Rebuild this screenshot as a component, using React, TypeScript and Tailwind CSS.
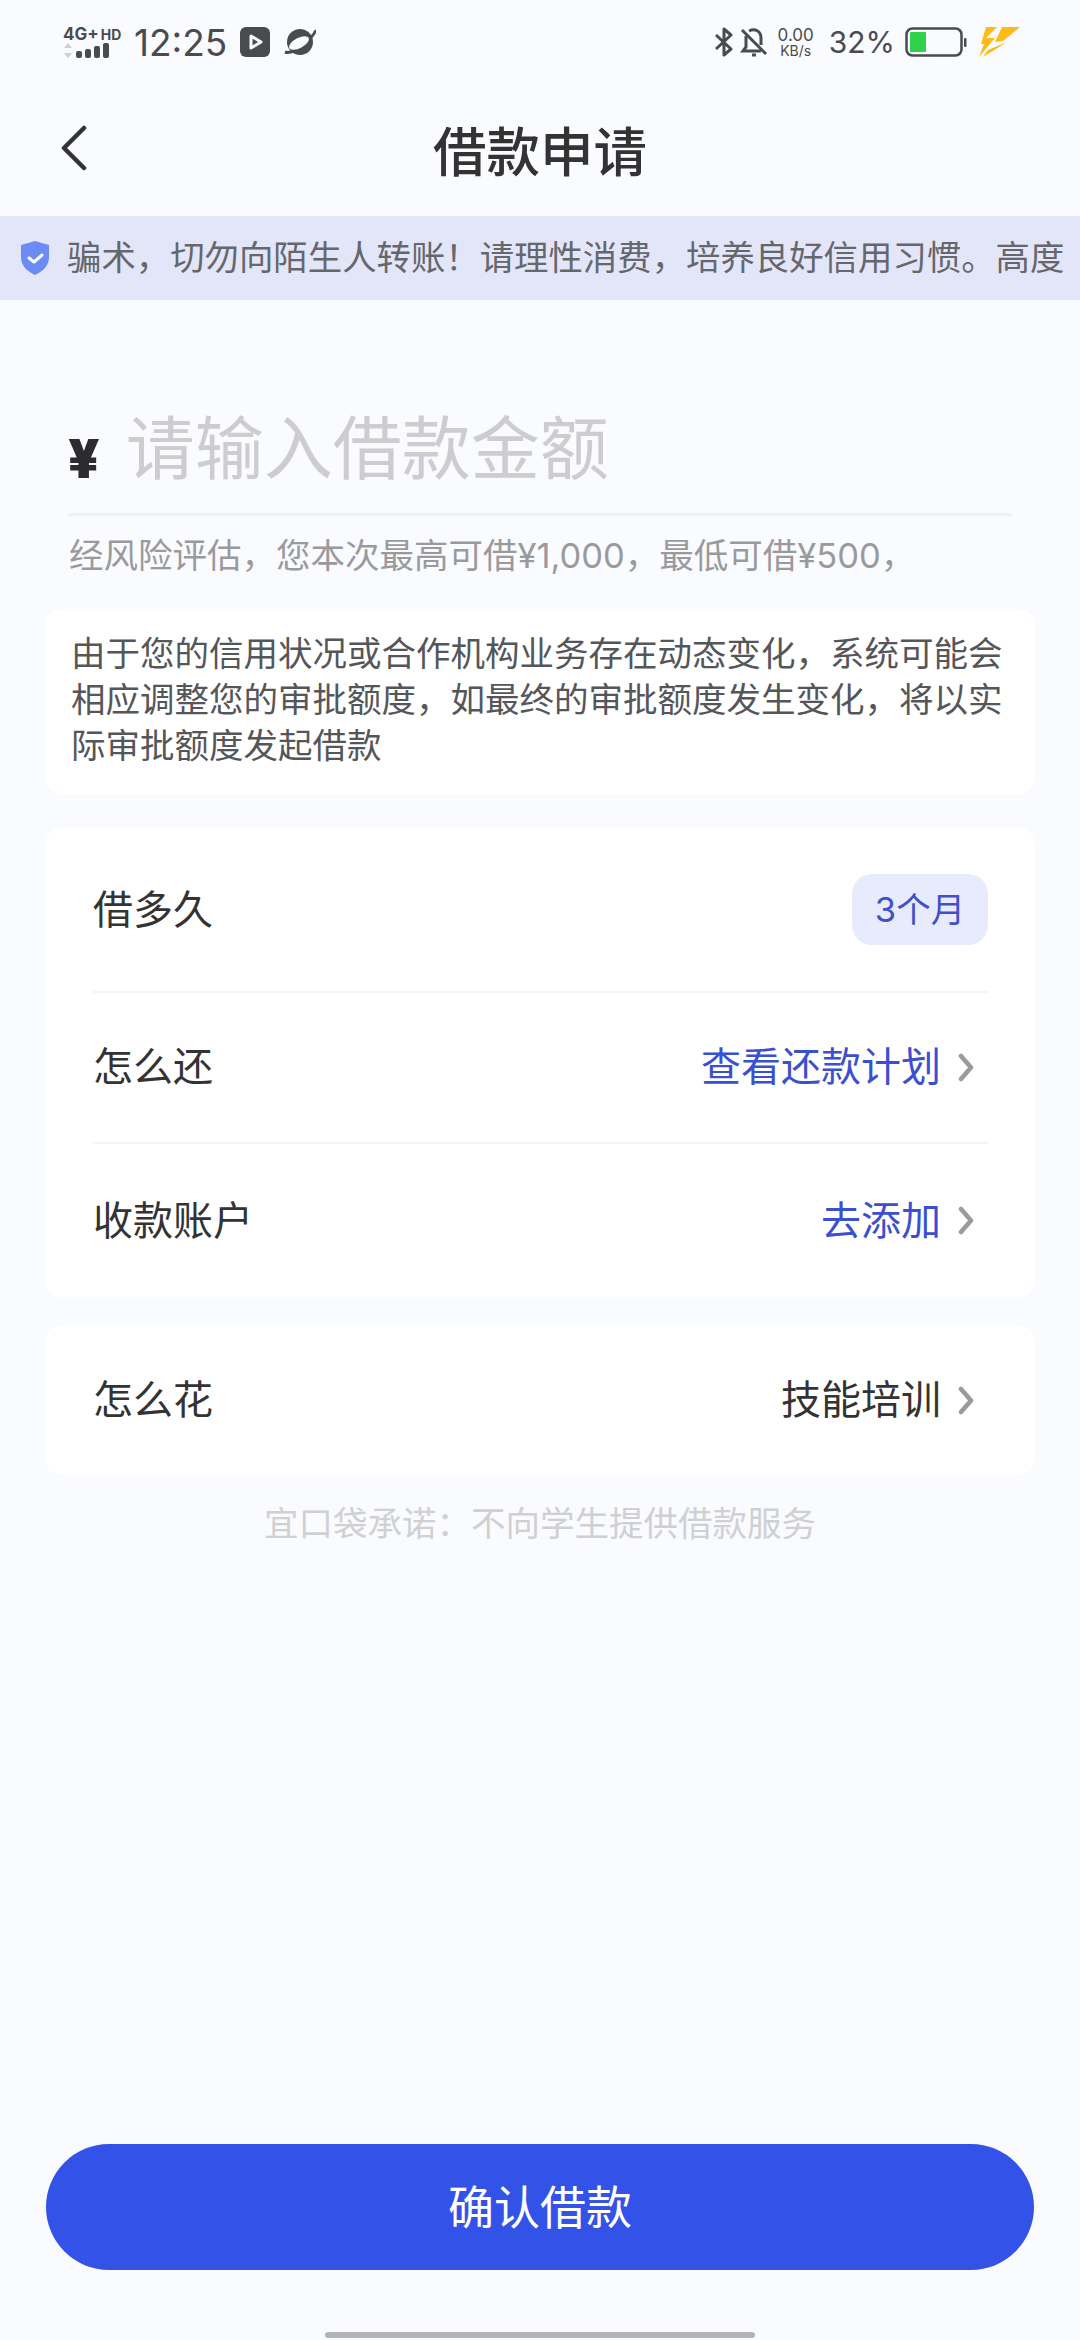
const font = { fontFamily: '"Inter", "Noto Sans CJK SC", sans-serif' };

function StatusBar() {
  return (
    <div className="flex h-[84px] items-center justify-between pl-[63px] pr-[60px] text-[#4a4b4f]">
      <div className="flex items-center">
        <div className="flex w-[60px] flex-col">
          <div className="flex items-baseline text-[17px] leading-[17px] font-bold whitespace-nowrap">
            <span>4G+</span>
            <span className="ml-[2px] text-[14px]">HD</span>
          </div>
          <svg width="48" height="16" viewBox="0 0 48 16">
            <path d="M5 0l4 5H1zM5 15l4-5H1z" fill="#cfd0d3" />
            <rect x="13" y="8" width="6" height="7" rx="2" fill="#4a4b4f" />
            <rect x="22" y="6" width="6" height="9" rx="2" fill="#4a4b4f" />
            <rect x="31" y="3" width="6" height="12" rx="2" fill="#4a4b4f" />
            <rect x="40" y="0" width="6" height="15" rx="2" fill="#4a4b4f" />
          </svg>
        </div>
        <span className="ml-[11px] text-[37px] leading-none">12:25</span>
        <svg width="30" height="30" viewBox="0 0 30 30" className="ml-[13px]">
          <rect width="30" height="30" rx="6" fill="#4a4b4f" />
          <path d="M11 9l10 6-10 6z" fill="none" stroke="#fafbff" strokeWidth="3" strokeLinejoin="round" />
        </svg>
        <svg width="32" height="28" viewBox="0 0 32 28" className="ml-[14px]">
          <circle cx="16" cy="14" r="13" fill="#4a4b4f" />
          <path d="M1 24C6 26 14 21 21 15s11-11 10-13" fill="none" stroke="#4a4b4f" strokeWidth="3" />
          <ellipse cx="15" cy="15" rx="11" ry="5" transform="rotate(-28 15 15)" fill="#fafbff" />
        </svg>
      </div>
      <div className="flex items-center">
        <svg width="20" height="30" viewBox="0 0 20 30" fill="none" stroke="#4a4b4f" strokeWidth="3">
          <path d="M2 8l15 14-7 6V2l7 6L2 22" strokeLinejoin="round" />
        </svg>
        <svg width="28" height="30" viewBox="0 0 28 30" fill="none" stroke="#4a4b4f" strokeWidth="3" className="ml-[6px]">
          <path d="M6 9v11l-3 4h18M9 4c6-3 12 0 12 7v7" />
          <path d="M2 3l24 24M12 28h4" />
        </svg>
        <div className="ml-[9px] flex w-[38px] flex-col items-center">
          <span className="text-[17px] leading-[17px]">0.00</span>
          <span className="text-[14px] leading-[14px]">KB/s</span>
        </div>
        <span className="ml-[14px] text-[30px] leading-none">32%</span>
        <svg width="62" height="30" viewBox="0 0 62 30" className="ml-[10px]">
          <rect x="1.5" y="1.5" width="55" height="27" rx="6" fill="none" stroke="#4a4b4f" strokeWidth="2.5" />
          <rect x="5" y="5" width="16" height="20" rx="1" fill="#2ed24d" />
          <rect x="59" y="11" width="2.5" height="9" rx="1" fill="#4a4b4f" />
        </svg>
        <svg width="42" height="32" viewBox="0 0 42 32" className="ml-[11px]">
          <path d="M8 1h11L8 12h9L1 31l5-13H3zM24 1h18L25 15l-8 1z" fill="#fbbc17" />
          <path d="M10 24l19-8-24 15z" fill="#fbbc17" />
        </svg>
      </div>
    </div>
  );
}

function Row({ label, value, blue, h }: { label: string; value: string; blue?: boolean; h: string }) {
  return (
    <div className={`flex items-center justify-between ${h}`}>
      <span className="text-[40px] leading-none text-[#333]">{label}</span>
      <div className="flex items-center">
        <span className={`text-[40px] leading-none ${blue ? "text-[#3a50cf]" : "text-[#333]"}`}>{value}</span>
        <svg width="16" height="29" viewBox="0 0 16 29" fill="none" className="mr-[14px] ml-[17px]">
          <path d="M3 3l10 11.5L3 26" stroke="#9a9a9a" strokeWidth="4.5" strokeLinecap="round" strokeLinejoin="round" />
        </svg>
      </div>
    </div>
  );
}

export default function App() {
  return (
    <div style={font} className="flex h-[2340px] w-[1080px] flex-col overflow-hidden bg-[#fafbff]">
      <StatusBar />

      <div className="relative flex h-[132px] items-center justify-center pt-[6px]">
        <svg width="28" height="46" viewBox="0 0 28 46" fill="none" className="absolute left-[60px] top-[41px]">
          <path d="M24 3L4 23l20 20" stroke="#333" strokeWidth="4.5" strokeLinecap="round" strokeLinejoin="round" />
        </svg>
        <h1 className="text-[53.5px] leading-none font-medium text-[#333]">借款申请</h1>
      </div>

      <div className="flex h-[84px] items-center overflow-hidden bg-[#e3e6f8] pl-[20px]">
        <svg width="30" height="34" viewBox="0 0 30 34" className="shrink-0">
          <path d="M15 0l14 4v12c0 9-6 14-14 18C7 30 1 25 1 16V4z" fill="#6b8cf5" />
          <path d="M9 17l5 4 8-7" fill="none" stroke="#fff" strokeWidth="3" strokeLinecap="round" strokeLinejoin="round" />
        </svg>
        <span className="ml-[17px] text-[34.4px] leading-none whitespace-nowrap text-[#66676c]">
          骗术，切勿向陌生人转账！请理性消费，培养良好信用习惯。高度
        </span>
      </div>

      <div className="mx-[68px] mt-[107px] flex h-[109px] items-center border-b-[3px] border-[#eff0f2] pb-[22px]">
        <span className="mt-[20px] text-[54px] leading-none font-black text-[#2c2c2e]">¥</span>
        <span className="ml-[26px] text-[69px] leading-none text-[#cdcdcf]">请输入借款金额</span>
      </div>

      <p className="mr-[68px] ml-[69px] mt-[17px] text-[34.5px] leading-[46px] whitespace-nowrap text-[#9a9a9d]">
        经风险评估，您本次最高可借¥1,000，最低可借¥500，
      </p>

      <div className="mx-[45px] mt-[30px] rounded-[16px] bg-white px-[26px] pt-[22px] pb-[25px] text-[34.5px] leading-[46px] text-[#55565a]">
        由于您的信用状况或合作机构业务存在动态变化，系统可能会相应调整您的审批额度，如最终的审批额度发生变化，将以实际审批额度发起借款
      </div>

      <div className="mx-[45px] mt-[34px] rounded-[16px] bg-white pr-[47px] pl-[48px]">
        <div className="flex h-[165px] items-center justify-between border-b-2 border-[#f3f3f5]">
          <span className="text-[40px] leading-none text-[#333]">借多久</span>
          <span className="flex h-[71px] w-[136px] items-center justify-center rounded-[20px] bg-[#e8ebfb] text-[34.5px] text-[#3f51c9]">
            3个月
          </span>
        </div>
        <div className="border-b-2 border-[#f3f3f5] pb-[1px]">
          <Row label="怎么还" value="查看还款计划" blue h="h-[148px]" />
        </div>
        <Row label="收款账户" value="去添加" blue h="h-[153px]" />
      </div>

      <div className="mx-[45px] mt-[28px] rounded-[16px] bg-white pr-[47px] pl-[48px]">
        <Row label="怎么花" value="技能培训" h="h-[150px]" />
      </div>

      <p className="mt-[26px] text-center text-[34.5px] leading-[46px] text-[#d0d0d3]">宜口袋承诺：不向学生提供借款服务</p>

      <button
        type="button"
        className="mx-[46px] mt-auto flex h-[126px] items-center justify-center rounded-full bg-[#3352e8] text-[46px] text-white"
      >
        确认借款
      </button>

      <div className="mx-auto mt-[62px] mb-[2px] h-[6px] w-[430px] rounded-full bg-[#b4b4b6]" />
    </div>
  );
}
